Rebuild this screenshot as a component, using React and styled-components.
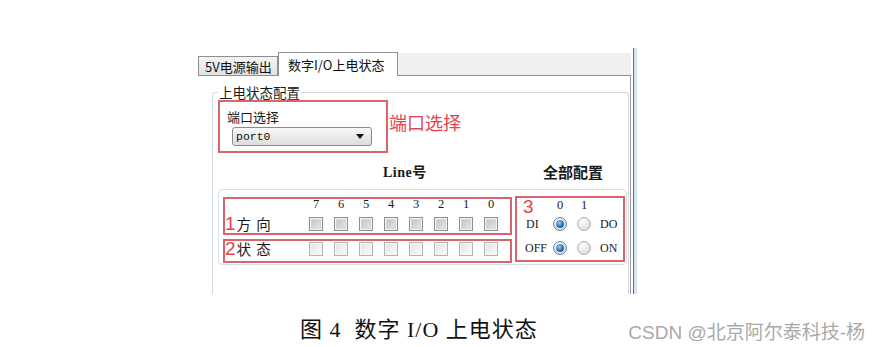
import React from 'react';
import styled, { createGlobalStyle } from 'styled-components';

const GlobalStyle = createGlobalStyle`
  html, body {
    margin: 0;
    padding: 0;
    background: #fff;
  }
  body {
    font-family: "Noto Sans CJK SC", "Liberation Sans", sans-serif;
    color: #1a1a1a;
  }
`;

const Page = styled.div`
  width: 879px;
  height: 347px;
  display: flex;
  flex-direction: column;
  overflow: hidden;
  background: #fff;
`;

const Window = styled.div`
  display: flex;
  margin: 52px 0 0 198px;
  width: 439px;
  height: 242px;
  flex-shrink: 0;
`;

const Main = styled.div`
  width: 433px;
  display: flex;
  flex-direction: column;
`;

const Edge = styled.div`
  box-sizing: border-box;
  width: 6px;
  margin-top: -4px;
  border-left: 2px solid #fff;
  border-right: 3px solid #d3e3f3;
  background: #6f6f6f;
`;

const TabStrip = styled.div`
  display: flex;
  align-items: flex-end;
  height: 24px;
  flex-shrink: 0;
`;

const Tab = styled.div`
  box-sizing: border-box;
  width: ${(p) => (p.$active ? '120px' : '80px')};
  height: ${(p) => (p.$active ? '24px' : '20px')};
  padding-left: ${(p) => (p.$active ? '9px' : '6px')};
  display: flex;
  align-items: center;
  border: 1px solid #8c8f96;
  border-bottom: ${(p) => (p.$active ? 'none' : '1px solid #8c8f96')};
  background: ${(p) => (p.$active ? '#fff' : 'linear-gradient(#f4f4f4, #e2e2e2)')};
  font-size: 13px;
  white-space: nowrap;
  color: #111;
`;

const TabFiller = styled.div`
  box-sizing: border-box;
  flex: 1;
  height: 23px;
  background: #f0f0f0;
  border-bottom: 1px solid #8c8f96;
`;

const Panel = styled.div`
  flex: 1;
  display: flex;
  flex-direction: column;
  background: #fff;
  border-right: 1px solid #9c9c9c;
`;

const GroupBox = styled.div`
  flex: 1;
  display: flex;
  flex-direction: column;
  margin: 16px 1px 0 14px;
  padding-left: 5px;
  border: 1px solid #d3d9de;
  border-bottom: none;
  border-radius: 3px 3px 0 0;
`;

const GroupTitle = styled.div`
  align-self: flex-start;
  margin: -9px 0 0 0;
  padding: 0 1px;
  background: #fff;
  font-size: 13.5px;
  line-height: 16px;
`;

const PortRow = styled.div`
  display: flex;
  align-items: flex-start;
`;

const RedBox = styled.div`
  box-sizing: border-box;
  border: 2px solid #d9646d;
`;

const PortBox = styled(RedBox)`
  width: 170px;
  height: 53px;
  padding: 7px 0 0 7px;
`;

const FieldLabel = styled.div`
  font-size: 13px;
  line-height: 16px;
`;

const Combo = styled.div`
  box-sizing: border-box;
  width: 140px;
  height: 19px;
  margin: 2px 0 0 5px;
  padding: 0 7px 0 3px;
  display: flex;
  align-items: center;
  justify-content: space-between;
  border: 1px solid #8b8b8b;
  border-radius: 3px;
  background: linear-gradient(#f8f8f8, #dddddd);
  font-family: "Liberation Mono", monospace;
  font-size: 11.5px;
  color: #111;
`;

const Arrow = styled.span`
  width: 0;
  height: 0;
  border-left: 4px solid transparent;
  border-right: 4px solid transparent;
  border-top: 5px solid #111;
`;

const RedNote = styled.div`
  margin: 13px 0 0 1px;
  font-size: 18px;
  line-height: 18px;
  color: #e5434f;
`;

const HeaderRow = styled.div`
  height: 36px;
  display: grid;
  grid-template-columns: 165px 160px 1fr;
  align-items: center;
  font-family: "Liberation Serif", "Noto Sans CJK SC", serif;
  font-weight: bold;
`;

const HeaderText = styled.div`
  grid-column: ${(p) => p.$col};
  font-size: ${(p) => p.$size}px;
  letter-spacing: ${(p) => p.$spacing || 0}px;
`;

const LineGroup = styled.div`
  box-sizing: border-box;
  height: 76px;
  margin-right: 1px;
  padding: 6px 1px 0 4px;
  display: flex;
  align-items: flex-start;
  border: 1px solid #d5dfe7;
  border-radius: 4px;
`;

const LeftCol = styled.div`
  width: 289px;
  display: flex;
  flex-direction: column;
`;

const LineBox = styled(RedBox)`
  height: ${(p) => p.$h}px;
  margin-top: ${(p) => p.$mt}px;
  padding-top: ${(p) => p.$pt}px;
  display: grid;
  grid-template-columns: 78.5px repeat(8, 25px);
  grid-template-rows: ${(p) => p.$rows};
  row-gap: 7px;
  align-items: start;
`;

const Digit = styled.div`
  justify-self: center;
  align-self: ${(p) => (p.$top ? 'start' : 'auto')};
  margin-top: ${(p) => (p.$top ? 2 : 0)}px;
  font-family: "Liberation Serif", serif;
  font-size: 12.5px;
  line-height: 11px;
`;

const RowLabel = styled.div`
  grid-column: 1;
  align-self: center;
  display: flex;
  align-items: center;
  height: 16px;
`;

const RowText = styled.span`
  font-size: 14.5px;
  line-height: 16px;
  letter-spacing: 1px;
  white-space: pre;
`;

const Num = styled.span`
  margin: 0 1px 0 0;
  font-family: "Liberation Sans", sans-serif;
  font-size: 19px;
  line-height: 16px;
  color: #e5434f;
`;

const Check = styled.span`
  box-sizing: border-box;
  justify-self: center;
  width: 14px;
  height: 14px;
  border: 1px solid ${(p) => (p.$dim ? '#b3b3b3' : '#8e8e8e')};
  background: ${(p) =>
    p.$dim
      ? 'linear-gradient(135deg, #e2e2e2, #fbfbfb)'
      : 'linear-gradient(135deg, #bdbdbd, #ececec)'};
  box-shadow: ${(p) =>
    p.$dim ? 'inset 0 0 0 1px #f6f6f6' : 'inset 0 0 0 1px #f4f4f4, inset 0 0 0 2px #d6d6d6'};
`;

const AllBox = styled(RedBox)`
  width: 110px;
  height: 66px;
  margin-left: 3px;
  display: flex;
  flex-direction: column;
`;

const RadioRow = styled.div`
  display: grid;
  grid-template-columns: 31px 24px 24px 1fr;
  height: ${(p) => p.$h}px;
  margin-top: ${(p) => p.$mt || 0}px;
  align-items: center;
  font-family: "Liberation Serif", serif;
  font-size: 12px;
`;

const SideLabel = styled.div`
  padding-left: ${(p) => p.$pl}px;
  line-height: 14px;
`;

const Radio = styled.span`
  box-sizing: border-box;
  justify-self: center;
  width: 14px;
  height: 14px;
  border-radius: 50%;
  border: 1px solid ${(p) => (p.$on ? '#5b7fa6' : '#b0b0b0')};
  background: radial-gradient(circle at 35% 30%, #ffffff, #d2d2d2);
  display: flex;
  align-items: center;
  justify-content: center;

  &::after {
    content: '';
    display: ${(p) => (p.$on ? 'block' : 'none')};
    width: 8px;
    height: 8px;
    border-radius: 50%;
    background: radial-gradient(circle at 40% 35%, #9ccbf0, #2a6aa8 60%, #174a80);
  }
`;

const CaptionRow = styled.div`
  flex: 1;
  display: flex;
  align-items: center;
  padding-top: 13px;
`;

const Caption = styled.div`
  margin-left: 300px;
  font-family: "Liberation Serif", "Noto Sans CJK SC", serif;
  font-size: 22px;
  letter-spacing: 1px;
  white-space: pre;
  color: #111;
`;

const Watermark = styled.div`
  margin: 6px 14px 0 auto;
  font-family: "Liberation Sans", "Noto Sans CJK SC", sans-serif;
  font-size: 19px;
  color: #a9a9a9;
  white-space: nowrap;
`;

const lines = [7, 6, 5, 4, 3, 2, 1, 0];

const App = () => {
  return (
    <>
      <GlobalStyle />
      <Page>
        <Window>
          <Main>
            <TabStrip>
              <Tab>5V电源输出</Tab>
              <Tab $active>数字I/O上电状态</Tab>
              <TabFiller />
            </TabStrip>
            <Panel>
              <GroupBox>
                <GroupTitle>上电状态配置</GroupTitle>
                <PortRow>
                  <PortBox>
                    <FieldLabel>端口选择</FieldLabel>
                    <Combo>
                      <span>port0</span>
                      <Arrow />
                    </Combo>
                  </PortBox>
                  <RedNote>端口选择</RedNote>
                </PortRow>
                <HeaderRow>
                  <HeaderText $col={2} $size={14} $spacing={0.5}>Line号</HeaderText>
                  <HeaderText $col={3} $size={15}>全部配置</HeaderText>
                </HeaderRow>
                <LineGroup>
                  <LeftCol>
                    <LineBox $h={38} $mt={1} $pt={0} $rows="11px 14px">
                      <span />
                      {lines.map((n) => (
                        <Digit key={n}>{n}</Digit>
                      ))}
                      <RowLabel>
                        <Num>1</Num>
                        <RowText>方 向</RowText>
                      </RowLabel>
                      {lines.map((n) => (
                        <Check key={n} />
                      ))}
                    </LineBox>
                    <LineBox $h={24} $mt={4} $pt={1} $rows="14px">
                      <RowLabel>
                        <Num>2</Num>
                        <RowText>状 态</RowText>
                      </RowLabel>
                      {lines.map((n) => (
                        <Check key={n} $dim />
                      ))}
                    </LineBox>
                  </LeftCol>
                  <AllBox>
                    <RadioRow $h={19}>
                      <SideLabel $pl={6}>
                        <Num>3</Num>
                      </SideLabel>
                      <Digit $top>0</Digit>
                      <Digit $top>1</Digit>
                    </RadioRow>
                    <RadioRow $h={14}>
                      <SideLabel $pl={9}>DI</SideLabel>
                      <Radio $on />
                      <Radio />
                      <SideLabel $pl={4}>DO</SideLabel>
                    </RadioRow>
                    <RadioRow $h={14} $mt={10}>
                      <SideLabel $pl={8}>OFF</SideLabel>
                      <Radio $on />
                      <Radio />
                      <SideLabel $pl={4}>ON</SideLabel>
                    </RadioRow>
                  </AllBox>
                </LineGroup>
              </GroupBox>
            </Panel>
          </Main>
          <Edge />
        </Window>
        <CaptionRow>
          <Caption>图 4  数字 I/O 上电状态</Caption>
          <Watermark>CSDN @北京阿尔泰科技-杨</Watermark>
        </CaptionRow>
      </Page>
    </>
  );
};

export default App;
